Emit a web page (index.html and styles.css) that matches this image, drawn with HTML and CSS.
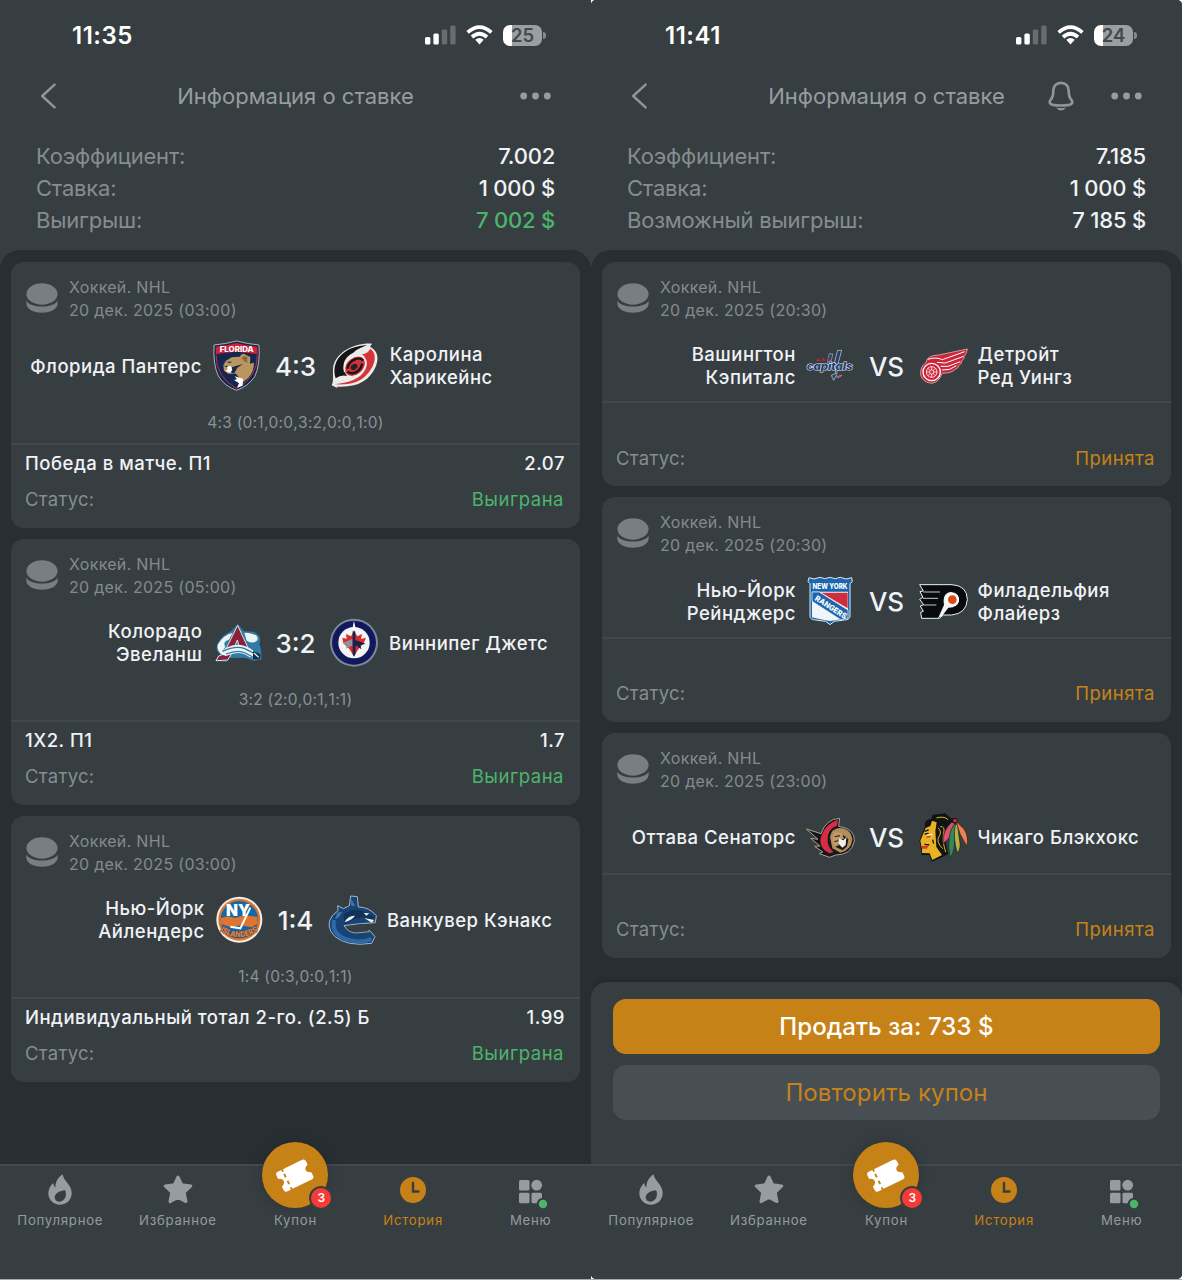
FILE: index.html
```html
<!DOCTYPE html>
<html lang="ru">
<head>
    <meta charset="UTF-8">
    <meta name="viewport" content="width=device-width, initial-scale=1.0">
    <title>Информация о ставке</title>
    <link rel="stylesheet" href="styles.css">
</head>
<body>
    <!-- Общие иконки -->
    <svg class="sprite" width="0" height="0">
        <symbol id="signal" viewBox="0 0 31 20">
            <rect x="0" y="12" width="5.4" height="7.5" rx="1.5" fill="#fff"/>
            <rect x="8.4" y="8.5" width="5.4" height="11" rx="1.5" fill="#fff"/>
            <rect x="16.8" y="4.5" width="5.4" height="15" rx="1.5" fill="#666c6f"/>
            <rect x="25.2" y="0.5" width="5.4" height="19" rx="1.5" fill="#666c6f"/>
        </symbol>
        <symbol id="wifi" viewBox="0 0 27 20">
            <g fill="none" stroke="#fff" stroke-width="3.7">
                <path d="M1.6 7.4Q13.5 -3 25.4 7.4"/>
                <path d="M6 12Q13.5 5.4 21 12"/>
            </g>
            <path d="M9.3 14.8Q13.5 11.4 17.7 14.8L13.5 19.4Z" fill="#fff"/>
        </symbol>
        <symbol id="back" viewBox="0 0 16 26">
            <path d="M14.6 1.6L2.2 13L14.6 24.4" fill="none" stroke="#8f9698" stroke-width="2.4" stroke-linecap="round" stroke-linejoin="round"/>
        </symbol>
        <symbol id="dots" viewBox="0 0 31 8">
            <circle cx="3.7" cy="4" r="3.4"/><circle cx="15.5" cy="4" r="3.4"/><circle cx="27.3" cy="4" r="3.4"/>
        </symbol>
        <symbol id="bell" viewBox="0 0 26 30">
            <path d="M13 1.8C8 1.8 5.3 5.5 5.3 10C5.3 15.5 4.4 17 2.4 19.2C1 21.4 2 23.2 4.6 23.8Q13 25.2 21.4 23.8C24 23.2 25 21.4 23.6 19.2C21.6 17 20.7 15.5 20.7 10C20.7 5.5 18 1.8 13 1.8Z" fill="none" stroke="#8f9698" stroke-width="2.700"/>
            <path d="M8 26.600Q13 27.600 18 26.600Q16.200 29.400 13 29.400Q9.800 29.400 8 26.600Z" fill="#8f9698"/>
        </symbol>
        <symbol id="puck" viewBox="0 0 32 31">
            <ellipse cx="16" cy="11" rx="15.6" ry="10.700"/>
            <path d="M.4 17.400C4 25.500 28 25.500 31.600 17.400V21.500C29.500 32.500 2.500 32.500 .4 21.500Z"/>
        </symbol>
        <symbol id="fire" viewBox="0 0 24 31">
            <path fill-rule="evenodd" d="M14.600 .2C15.400 6 20.500 8.500 22.800 14.500C26 23.500 20 30.700 12 30.700C4 30.700 -1.300 23.500 .8 16C1.600 13 3.500 10.500 5.200 9C5.600 11 6.200 12.400 7.400 13.600C7.200 8.500 9.500 3.500 14.600 .2ZM17.200 16.200C11.500 16.500 6.500 19.500 6.700 23.600C6.900 27.200 10.300 28.200 12.600 27.500C17.500 26.200 19 21.500 17.200 16.200Z"/>
        </symbol>
        <symbol id="star" viewBox="0 0 30 29">
            <path d="M15 2L18.700 9.800L27.800 11L21.200 17.300L23 26.600L15 22.400L7 26.600L8.800 17.300L2.200 11L11.300 9.800Z" stroke-width="3" stroke-linejoin="round"/>
        </symbol>
        <symbol id="ticket" viewBox="0 0 40 34">
            <g transform="rotate(-26 20 17)">
                <path d="M5 5.500H9.500V7.800H11.500V5.500H34Q37 5.500 37 8.500V12.500Q32.500 14 32.500 17Q32.500 20 37 21.500V25.500Q37 28.500 34 28.500H11.500V26.200H9.500V28.500H5Q2.500 28.500 2.500 25.500V21.500Q6.800 20 6.800 17Q6.800 14 2.500 12.500V8.500Q2.500 5.500 5 5.500Z" fill="#fff"/>
                <path d="M10.500 10.500V14.500M10.500 18.500V22.500" stroke="#c78217" stroke-width="2"/>
            </g>
        </symbol>
        <symbol id="clock" viewBox="0 0 26 26">
            <circle cx="13" cy="13" r="13" fill="#c78217"/>
            <path d="M13 6V14.500H18.500" fill="none" stroke="#373e41" stroke-width="2.400" stroke-linecap="round"/>
        </symbol>
        <symbol id="menu" viewBox="0 0 30 30">
            <rect x="1" y="1" width="10.500" height="10.500" rx="1.500"/>
            <circle cx="18.700" cy="6.200" r="5.400"/>
            <rect x="1" y="13.800" width="10.500" height="10.500" rx="1.500"/>
            <rect x="13.500" y="13.800" width="10.500" height="10.500" rx="1.500"/>
            <circle cx="25" cy="25" r="5.200" fill="#4cb56c" stroke="#373e41" stroke-width="2"/>
        </symbol>
    </svg>

    <div class="screens">
        <!-- Рассчитанная ставка -->
        <section class="phone">
            <div class="statusbar">
                <span class="time">11:35</span>
                <svg class="signal"><use href="#signal"/></svg>
                <svg class="wifi"><use href="#wifi"/></svg>
                <span class="battery">25</span>
            </div>
            <header class="header">
                <svg class="back"><use href="#back"/></svg>
                <h1>Информация о ставке</h1>
                <div class="actions">
                    <svg class="dots"><use href="#dots"/></svg>
                </div>
            </header>
            <div class="summary">
                <div class="line"><span>Коэффициент:</span><b>7.002</b></div>
                <div class="line"><span>Ставка:</span><b>1 000 $</b></div>
                <div class="line"><span>Выигрыш:</span><b class="win">7 002 $</b></div>
            </div>

            <main class="list">
                <article class="card">
                    <div class="meta">
                        <svg class="puck"><use href="#puck"/></svg>
                        <p>Хоккей. NHL<br>20 дек. 2025 (03:00)</p>
                    </div>
                    <div class="match">
                        <span class="team home">Флорида Пантерс</span>
                        <svg class="logo" viewBox="37 36 144 144">
                            <path d="M43 45Q78 42 111 33Q144 42 178 45Q182 105 165 140Q145 169 111 181Q75 169 56 138Q40 105 43 45Z" fill="#15274f" stroke="#c5ccd4" stroke-width="2.500"/>
                            <path d="M48 50Q80 48 111 39Q142 48 173 50L173 73Q142 67 111 65Q80 67 49 73Z" fill="#d3213a"/>
                            <path d="M49 74Q48 140 111 176Q174 140 173 74" fill="none" stroke="#ba3043" stroke-width="3"/>
                            <text x="111" y="65" text-anchor="middle" font-size="21" font-weight="800" fill="#fff" textLength="102" lengthAdjust="spacingAndGlyphs">FLORIDA</text>
                            <path d="M71 106L78 93L96 82L120 80Q128 66 138 74L152 81L151 101L163 98Q163 125 146 143L119 166L120 145L109 131L86 131L73 122Z" fill="#b99560"/>
                            <path d="M126 84Q132 76 143 81L143 99L133 94Z" fill="#8a693c"/>
                            <path d="M80 95L97 95L91 100ZM98 111L130 102L113 113L103 131L93 126Z" fill="#172949"/>
                            <path d="M74 108L94 109L98 120L91 129L77 123L85 117ZM105 139L130 146L129 167L112 173L118 160L103 150L112 148Z" fill="#fff"/>
                            <path d="M73 107L86 108L81 113Z" fill="#25304c"/>
                        </svg>
                        <strong class="score">4:3</strong>
                        <svg class="logo" viewBox="391 36 144 144">
                            <path d="M393 166C400 152 396 134 397 116C402 68 460 38 514 41L508 50C545 68 530 112 509 136C486 164 450 172 408 170L411 175Z" fill="#ecebea"/>
                            <path d="M405 145C390 97 424 49 500 46Q473 54 458 68C425 83 421 117 440 138Q421 133 405 145Z" fill="#151416"/>
                            <path d="M509 56C534 75 520 110 500 132C478 158 446 165 401 163Q447 158 468 145C502 126 507 91 484 73Q502 70 509 56Z" fill="#d5343b"/>
                            <ellipse cx="462" cy="108" rx="34" ry="27" transform="rotate(-38 462 108)" fill="#d13139"/>
                            <path d="M432 126C425 93 462 68 490 81" fill="none" stroke="#f1efee" stroke-width="5"/>
                            <path d="M494 89C501 116 474 146 440 139" fill="none" stroke="#f1efee" stroke-width="5"/>
                            <path d="M440 116C445 88 479 78 487 92M485 101C478 128 454 136 441 125" fill="none" stroke="#171417" stroke-width="7"/>
                            <ellipse cx="460" cy="111" rx="11" ry="8" transform="rotate(-35 460 111)" fill="#222"/>
                        </svg>
                        <span class="team">Каролина<br>Харикейнс</span>
                    </div>
                    <p class="periods">4:3 (0:1,0:0,3:2,0:0,1:0)</p>
                    <div class="bet">
                        <div class="row"><span>Победа в матче. П1</span><span>2.07</span></div>
                        <div class="row state"><span>Статус:</span><span class="win">Выиграна</span></div>
                    </div>
                </article>

                <article class="card">
                    <div class="meta">
                        <svg class="puck"><use href="#puck"/></svg>
                        <p>Хоккей. NHL<br>20 дек. 2025 (05:00)</p>
                    </div>
                    <div class="match">
                        <span class="team home">Колорадо<br>Эвеланш</span>
                        <svg class="logo" viewBox="37 28 144 144">
                            <path d="M44 154L59 132Q40 124 53 97Q67 75 91 65L111 43L130 65L158 66Q186 77 176 103Q184 119 182 150L158 153L134 144L86 145L78 156Z" fill="#317ba8"/>
                            <path d="M51 105Q69 75 96 70L84 91Q65 95 74 112L60 128Q49 120 51 105ZM131 69Q177 71 170 92Q159 105 138 93Z" fill="#eef4f5"/>
                            <path d="M68 134L111 47L145 121L119 122L110 91L94 130L81 151L46 153L54 139Z" fill="#8d2038" stroke="#dbe1e5" stroke-width="3"/>
                            <path d="M51 112Q59 126 77 114Q103 101 130 108Q156 115 174 142Q150 148 135 135Q112 124 76 139Q50 132 51 112Z" fill="#eef4f5"/>
                            <path d="M65 125Q106 106 132 117T171 141M76 133Q112 119 134 130T163 146" fill="none" stroke="#287ca6" stroke-width="4"/>
                            <path d="M157 124L180 134L177 149L157 149Z" fill="#172d43"/>
                            <path d="M160 130L174 143" stroke="#d9e7ee" stroke-width="4"/>
                        </svg>
                        <strong class="score">3:2</strong>
                        <svg class="logo" viewBox="390 28 144 144">
                            <circle cx="462" cy="99" r="72" fill="#7d8998"/>
                            <circle cx="462" cy="99" r="66" fill="#11185c"/>
                            <circle cx="462" cy="99" r="47" fill="#f5f5f5"/>
                            <path d="M427 84L440 87L438 73L453 80L462 64L472 80L486 73L483 88L498 84L491 101L475 119L462 140L448 118L430 101Z" fill="#d92d2b"/>
                            <path d="M457 88L428 100L440 106L438 117L458 107Z" fill="#8c959d"/>
                            <path d="M462 40L466 69V91L497 102L481 107L484 119L467 107L466 134L462 141L458 134V68Z" fill="#172352"/>
                            <path d="M462 33L467 58L462 67L457 58Z" fill="#fff"/>
                        </svg>
                        <span class="team">Виннипег Джетс</span>
                    </div>
                    <p class="periods">3:2 (2:0,0:1,1:1)</p>
                    <div class="bet">
                        <div class="row"><span>1X2. П1</span><span>1.7</span></div>
                        <div class="row state"><span>Статус:</span><span class="win">Выиграна</span></div>
                    </div>
                </article>

                <article class="card">
                    <div class="meta">
                        <svg class="puck"><use href="#puck"/></svg>
                        <p>Хоккей. NHL<br>20 дек. 2025 (03:00)</p>
                    </div>
                    <div class="match">
                        <span class="team home">Нью-Йорк<br>Айлендерс</span>
                        <svg class="logo" viewBox="43 35 144 144">
                            <circle cx="116" cy="106" r="69" fill="#f3eee8"/>
                            <circle cx="116" cy="106" r="63" fill="#d9742e"/>
                            <circle cx="116" cy="106" r="56" fill="#1667a7"/>
                            <path d="M61 101L83 96L103 101L131 93L170 98L171 118L154 129L119 123L92 129L61 119Z" fill="#df752e"/>
                            <text x="112" y="95" text-anchor="middle" font-size="48" font-weight="900" fill="#fff" textLength="72" lengthAdjust="spacingAndGlyphs">NY</text>
                            <path d="M149 70L119 132L89 127" fill="none" stroke="#fff" stroke-width="6"/>
                            <path id="islandArc" d="M58 140Q115 178 174 139" fill="none"/>
                            <text font-size="24" font-weight="900" fill="#e37a31" stroke="#20446e" stroke-width="2" paint-order="stroke"><textPath href="#islandArc" textLength="122" lengthAdjust="spacingAndGlyphs">ISLANDERS</textPath></text>
                        </svg>
                        <strong class="score">1:4</strong>
                        <svg class="logo" viewBox="384 35 144 144">
                            <path d="M413 64L430 73L448 64L452 35L472 37L475 68Q508 68 529 94L526 115L509 116L471 119L432 124Q444 144 470 143L509 139L525 157L515 177Q442 188 404 156Q374 125 397 94L414 79Z" fill="#174475" stroke="#a6b5c5" stroke-width="3"/>
                            <path d="M402 107Q394 151 440 165T514 163" fill="none" stroke="#2b6aa6" stroke-width="12"/>
                            <path d="M430 93Q454 69 485 79L526 99L520 112L492 99L463 104L434 119Z" fill="#123256"/>
                            <path d="M434 114Q443 93 465 94Q457 106 434 114ZM491 86L508 87L499 94ZM493 101L523 107L515 115Z" fill="#e9f1f5"/>
                            <path d="M454 44L466 66L452 63ZM412 85L427 82L417 99L405 105Z" fill="#4077a9"/>
                            <path d="M434 127Q446 146 470 146L508 142L490 118Z" fill="#373e41"/>
                            <path d="M434 127Q446 146 470 146L508 142" fill="none" stroke="#a6b5c5" stroke-width="2.500"/>
                        </svg>
                        <span class="team">Ванкувер Кэнакс</span>
                    </div>
                    <p class="periods">1:4 (0:3,0:0,1:1)</p>
                    <div class="bet">
                        <div class="row"><span>Индивидуальный тотал 2-го. (2.5) Б</span><span>1.99</span></div>
                        <div class="row state"><span>Статус:</span><span class="win">Выиграна</span></div>
                    </div>
                </article>
            </main>

            <nav class="tabbar">
                <div class="tab"><svg class="ico-fire"><use href="#fire"/></svg><span>Популярное</span></div>
                <div class="tab"><svg class="ico-star"><use href="#star"/></svg><span>Избранное</span></div>
                <div class="tab"><div class="coupon"><svg><use href="#ticket"/></svg><i>3</i></div><span>Купон</span></div>
                <div class="tab active"><svg class="ico-clock"><use href="#clock"/></svg><span>История</span></div>
                <div class="tab"><svg class="ico-menu"><use href="#menu"/></svg><span>Меню</span></div>
            </nav>
        </section>

        <!-- Открытая ставка -->
        <section class="phone open">
            <div class="statusbar">
                <span class="time">11:41</span>
                <svg class="signal"><use href="#signal"/></svg>
                <svg class="wifi"><use href="#wifi"/></svg>
                <span class="battery">24</span>
            </div>
            <header class="header">
                <svg class="back"><use href="#back"/></svg>
                <h1>Информация о ставке</h1>
                <div class="actions">
                    <svg class="bell"><use href="#bell"/></svg>
                    <svg class="dots"><use href="#dots"/></svg>
                </div>
            </header>
            <div class="summary">
                <div class="line"><span>Коэффициент:</span><b>7.185</b></div>
                <div class="line"><span>Ставка:</span><b>1 000 $</b></div>
                <div class="line"><span>Возможный выигрыш:</span><b>7 185 $</b></div>
            </div>

            <main class="list">
                <article class="card">
                    <div class="meta">
                        <svg class="puck"><use href="#puck"/></svg>
                        <p>Хоккей. NHL<br>20 дек. 2025 (20:30)</p>
                    </div>
                    <div class="match">
                        <span class="team home">Вашингтон<br>Кэпиталс</span>
                        <svg class="logo" viewBox="36 23 144 144">
                            <path d="M131 48L143 48L132 88L128 121L119 138L112 123L125 118L121 86Z" fill="#203e6b" stroke="#d2dbe4" stroke-width="2"/>
                            <path d="M106 58L117 59L108 91L99 91Z" fill="#27456c" stroke="#ccd6df" stroke-width="1.500"/>
                            <text x="38" y="108" font-size="31" font-weight="800" font-style="italic" fill="#233f6e" stroke="#e3e8ec" stroke-width="3" paint-order="stroke" textLength="138" lengthAdjust="spacingAndGlyphs">capitals</text>
                            <path d="M65 80L72 71L80 80ZM81 79L87 69L95 79ZM96 78L102 68L109 78Z" fill="#a62c43"/>
                            <path d="M128 127L144 122L141 126L130 131Z" fill="#cf3044" stroke="#d9dde0" stroke-width="1"/>
                        </svg>
                        <strong class="score">VS</strong>
                        <svg class="logo" viewBox="369 23 144 144">
                            <path d="M390 85Q392 63 428 62L514 44Q512 60 504 66Q508 72 497 80Q499 87 488 94Q488 101 478 105Q466 117 438 117Q430 143 408 147Q380 145 374 122Q371 98 390 85Z" fill="#c9283b" stroke="#f4c9cb" stroke-width="2"/>
                            <path d="M395 75Q421 67 439 76L506 52M423 84L448 86L503 66M434 96L456 96L493 82M438 107L461 105L481 94" fill="none" stroke="#fff" stroke-width="3"/>
                            <circle cx="407" cy="113" r="26" fill="#cf2438" stroke="#fff" stroke-width="4"/>
                            <circle cx="407" cy="113" r="16" fill="none" stroke="#fff" stroke-width="2.500"/>
                            <path d="M407 97V129M391 113H423M396 102L418 124M418 102L396 124" stroke="#fff" stroke-width="2.500"/>
                            <circle cx="407" cy="113" r="6" fill="#cf2438" stroke="#fff" stroke-width="2"/>
                        </svg>
                        <span class="team">Детройт<br>Ред Уингз</span>
                    </div>
                    <div class="bet">
                        <div class="row state"><span>Статус:</span><span class="accepted">Принята</span></div>
                    </div>
                </article>

                <article class="card">
                    <div class="meta">
                        <svg class="puck"><use href="#puck"/></svg>
                        <p>Хоккей. NHL<br>20 дек. 2025 (20:30)</p>
                    </div>
                    <div class="match">
                        <span class="team home">Нью-Йорк<br>Рейнджерс</span>
                        <svg class="logo" viewBox="36 26 144 144">
                            <path d="M45 25L60 29L78 24Q92 32 108 24Q124 32 139 24L156 29L173 25L175 37L168 43V142Q166 152 151 152L121 156L108 166L95 156L65 152Q50 151 48 142V43L42 37Z" fill="#1d66ae" stroke="#dceaf5" stroke-width="3"/>
                            <path d="M54 67H162V145Q139 151 108 155Q78 151 54 144Z" fill="#f1f5f8"/>
                            <path d="M82 70H161V117Z" fill="#ce2e3e"/>
                            <path d="M54 68H76L162 122V146L140 151L54 96Z" fill="#1d66ae" stroke="#fff" stroke-width="2"/>
                            <text x="108" y="60" text-anchor="middle" font-size="24" font-weight="800" fill="#fff" textLength="105" lengthAdjust="spacingAndGlyphs">NEW YORK</text>
                            <text x="61" y="91" transform="rotate(33 61 91)" font-size="23" font-weight="800" fill="#fff" textLength="108" lengthAdjust="spacingAndGlyphs">RANGERS</text>
                        </svg>
                        <strong class="score">VS</strong>
                        <svg class="logo" viewBox="369 26 144 144">
                            <path d="M371 46H468Q514 49 514 91Q511 133 467 137H442L430 147H377L374 129L382 126L373 110L383 106L371 90L381 84L372 67L382 65Z" fill="#080b0d" stroke="#eef1f2" stroke-width="3"/>
                            <path d="M382 68H432M381 87H426M383 107H421" stroke="#edf0f1" stroke-width="2.500"/>
                            <path d="M426 147L444 107Q438 70 466 68Q492 72 489 96Q483 116 457 115L439 139Z" fill="#f2f2f2"/>
                            <circle cx="469" cy="91" r="20" fill="#fff"/>
                            <circle cx="469" cy="91" r="13" fill="#dc4b15"/>
                        </svg>
                        <span class="team">Филадельфия<br>Флайерз</span>
                    </div>
                    <div class="bet">
                        <div class="row state"><span>Статус:</span><span class="accepted">Принята</span></div>
                    </div>
                </article>

                <article class="card">
                    <div class="meta">
                        <svg class="puck"><use href="#puck"/></svg>
                        <p>Хоккей. NHL<br>20 дек. 2025 (23:00)</p>
                    </div>
                    <div class="match">
                        <span class="team home">Оттава Сенаторс</span>
                        <svg class="logo" viewBox="36 28 144 144">
                            <path d="M37 73L81 87Q96 43 137 41L134 65Q184 72 181 109Q173 151 125 151L107 158L76 147L86 142L62 125L78 124L50 101L72 104Z" fill="#171719" stroke="#a9a18f" stroke-width="3"/>
                            <path d="M106 146Q67 127 85 86Q101 54 132 45L129 63Q101 73 101 103Q99 128 119 142Z" fill="#d42d45"/>
                            <path d="M108 97Q111 73 135 70Q172 71 175 105Q171 137 139 144L115 131Z" fill="#b28d5c"/>
                            <path d="M119 112L126 95L149 92L163 104L159 125L146 137L124 126L137 121L119 119Z" fill="#181a1d"/>
                            <path d="M120 83L143 84L150 103L132 102L136 119L120 124L114 108Z" fill="#c39b65"/>
                            <path d="M134 100L148 107L157 98L155 121L145 129L134 117Z" fill="#f1eee9"/>
                            <path d="M122 96L138 93M121 111L132 108" stroke="#191a1e" stroke-width="3"/>
                        </svg>
                        <strong class="score">VS</strong>
                        <svg class="logo" viewBox="369 28 144 144">
                            <path d="M387 66Q382 46 405 43L410 30L448 26L463 40L479 42L485 53L463 64L448 103L456 149L438 158L408 171L400 151H377L373 117L370 108Z" fill="#111315"/>
                            <path d="M389 70L403 64L408 48L422 53L418 80L421 127L438 151L409 166L401 146L378 145L378 132L373 108Z" fill="#ebb323"/>
                            <path d="M421 40Q444 33 456 45M433 66Q448 64 443 86T449 142M426 69Q439 81 429 96T440 132" fill="none" stroke="#e1b32b" stroke-width="3"/>
                            <path d="M385 80L398 76M386 88L398 86M385 119L400 121M410 105L413 117" stroke="#17171a" stroke-width="4"/>
                            <path d="M393 91L409 89M396 99L407 96" stroke="#fff" stroke-width="3"/>
                            <path d="M378 124H397L393 132H378ZM392 95L406 94L403 99H391Z" fill="#d73736"/>
                            <path d="M467 53Q438 79 441 117L462 98L478 57Z" fill="#df526d" stroke="#25232a" stroke-width="2"/>
                            <path d="M474 59Q451 91 462 159Q479 137 475 101L481 59Z" fill="#36885c" stroke="#152c25" stroke-width="2"/>
                            <path d="M478 61Q470 99 484 145Q497 130 490 103L484 58Z" fill="#b7b344" stroke="#24231f" stroke-width="2"/>
                            <path d="M480 50Q489 90 513 125Q519 96 504 73Z" fill="#ef8054" stroke="#24231f" stroke-width="2"/>
                            <circle cx="477" cy="48" r="7" fill="#c43237" stroke="#111" stroke-width="3"/>
                        </svg>
                        <span class="team">Чикаго Блэкхокс</span>
                    </div>
                    <div class="bet">
                        <div class="row state"><span>Статус:</span><span class="accepted">Принята</span></div>
                    </div>
                </article>
            </main>

            <div class="sheet">
                <button class="btn sell">Продать за: 733 $</button>
                <button class="btn repeat">Повторить купон</button>
            </div>

            <nav class="tabbar">
                <div class="tab"><svg class="ico-fire"><use href="#fire"/></svg><span>Популярное</span></div>
                <div class="tab"><svg class="ico-star"><use href="#star"/></svg><span>Избранное</span></div>
                <div class="tab"><div class="coupon"><svg><use href="#ticket"/></svg><i>3</i></div><span>Купон</span></div>
                <div class="tab active"><svg class="ico-clock"><use href="#clock"/></svg><span>История</span></div>
                <div class="tab"><svg class="ico-menu"><use href="#menu"/></svg><span>Меню</span></div>
            </nav>
        </section>
    </div>
</body>
</html>
```
FILE: styles.css
```css
* {
    box-sizing: border-box;
}
body {
    margin: 0;
    background: #fff;
    font-family: Inter, Roboto, sans-serif;
    color: #f0f2f6;
}
p, h1 {
    margin: 0;
}
svg {
    display: block;
    flex: none;
}
.sprite {
    position: absolute;
}
.screens {
    display: grid;
    grid-template-columns: 591px 591px;
    height: 1280px;
    background: #a6abac;
}
.phone {
    display: flex;
    flex-direction: column;
    height: 1279px;
    background: linear-gradient(#373e41 300px, #282f32 300px);
    overflow: hidden;
}
.open {
    border-radius: 5px;
    box-shadow: 0 0 0 5px #fff;
    clip-path: inset(0 0 0 0);
}

/* Верх экрана */
.statusbar {
    display: flex;
    align-items: center;
    height: 72px;
    padding: 0 49px 2px 72px;
    background: #373e41;
}
.time {
    flex: 1;
    font-size: 24px;
    font-weight: 600;
    letter-spacing: 0.5px;
    color: #fff;
}
.open .time {
    padding-left: 2px;
}
.signal {
    width: 31px;
    height: 20px;
    margin-right: 10px;
}
.wifi {
    width: 27px;
    height: 20px;
    margin-right: 10px;
}
.battery {
    position: relative;
    width: 39px;
    height: 21px;
    border-radius: 7px;
    background: linear-gradient(to right, #fff 9px, #9a9fa1 9px);
    color: #434a4d;
    font-size: 18.500px;
    line-height: 21px;
    font-weight: 600;
    text-align: center;
}
.battery::after {
    content: "";
    position: absolute;
    left: 40px;
    top: 7px;
    width: 3px;
    height: 7px;
    border-radius: 0 3px 3px 0;
    background: #858b8d;
}
.header {
    display: grid;
    grid-template-columns: 110px 1fr 110px;
    align-items: center;
    height: 48px;
    padding: 0 40px;
    background: #373e41;
}
.back {
    width: 16px;
    height: 26px;
}
.header h1 {
    font-size: 22px;
    font-weight: 400;
    line-height: 30px;
    text-align: center;
    white-space: nowrap;
    color: #969d9f;
}
.actions {
    display: flex;
    justify-content: flex-end;
    align-items: center;
    gap: 37px;
    fill: #969d9f;
}
.dots {
    width: 31px;
    height: 8px;
}
.bell {
    width: 26px;
    height: 30px;
}
.summary {
    height: 131px;
    padding: 20px 36px 0;
    background: #373e41;
}
.line {
    display: flex;
    justify-content: space-between;
    height: 32px;
    line-height: 32px;
    font-size: 22px;
    letter-spacing: -0.200px;
}
.line span {
    color: #868d8f;
}
.line b {
    font-weight: 500;
}
.line .win, .win {
    color: #4cb56c;
}
.accepted {
    color: #c78217;
}

/* Список событий */
.list {
    flex: 1;
    min-height: 0;
    display: flex;
    flex-direction: column;
    gap: 11.200px;
    padding: 10.500px 11px 0;
    background: #282f32;
    box-shadow: 0 -1px 0 #282f32;
    border-radius: 20px 20px 0 0;
}
.card {
    flex: none;
    width: 569px;
    height: 266px;
    border-radius: 13px;
    background: #373e41;
}
.open .card {
    height: 224.600px;
}
.meta {
    display: flex;
    gap: 11px;
    height: 69.500px;
    padding: 14px 15px 0 15px;
    font-size: 16px;
    line-height: 23px;
    letter-spacing: 0.3px;
    color: #848b8d;
}
.puck {
    width: 32px;
    height: 31px;
    margin-top: 7px;
    fill: #777f82;
}
.match {
    display: grid;
    grid-template-columns: 1fr 48px auto 48px 1fr;
    align-items: center;
    height: 70px;
}
.logo {
    width: 48px;
    height: 48px;
    overflow: visible;
}
.team {
    padding-left: 11px;
    font-size: 18.500px;
    line-height: 23px;
    letter-spacing: 0.500px;
    font-weight: 450;
    white-space: nowrap;
}
.home {
    padding: 0 10.500px 0 0;
    text-align: right;
}
.score {
    padding: 0 14.500px;
    font-size: 26px;
    font-weight: 500;
}
.periods {
    height: 41.500px;
    line-height: 43px;
    font-size: 15.500px;
    letter-spacing: 0.250px;
    font-kerning: none;
    font-feature-settings: "calt" 0;
    text-align: center;
    color: #8b9294;
}
.bet {
    border-top: 2px solid #41484b;
    padding: 0 15px 0 14px;
}
.open .bet {
    padding-top: 36.500px;
}
.row {
    display: flex;
    justify-content: space-between;
    height: 36px;
    line-height: 36px;
    font-size: 18.500px;
    letter-spacing: 0.500px;
    font-weight: 450;
}
.state {
    font-weight: 400;
    padding-right: 1px;
}
.state span:first-child {
    color: #868d8f;
    letter-spacing: 0.300px;
}

/* Кнопки купона */
.sheet {
    display: flex;
    flex-direction: column;
    gap: 11px;
    height: 182px;
    padding: 17px 22px 0;
    border-radius: 16px 16px 0 0;
    background: #373e41;
    box-shadow: 0 -2px 6px rgba(0, 0, 0, 0.15);
}
.btn {
    height: 55px;
    border: 0;
    border-radius: 13px;
    font: 450 24px Inter, Roboto, sans-serif;
    letter-spacing: 0.100px;
}
.sell {
    background: #c78217;
    color: #fff;
}
.repeat {
    background: #474f54;
    color: #c78217;
    font-weight: 400;
}

/* Нижняя навигация */
.tabbar {
    display: grid;
    grid-template-columns: repeat(5, 117.600px);
    justify-content: center;
    height: 115px;
    border-top: 2px solid #434a4d;
    background: #373e41;
}
.tab {
    position: relative;
    display: flex;
    flex-direction: column;
    align-items: center;
    justify-content: flex-end;
    height: 63px;
    font-size: 13.200px;
    line-height: 18px;
    letter-spacing: 0.750px;
    color: #949b9d;
    fill: #969da0;
}
.tab span {
    margin-top: 3px;
}
.active {
    color: #c78217;
}
.ico-fire {
    width: 24px;
    height: 31px;
    margin-bottom: 3px;
}
.ico-star {
    width: 30px;
    height: 29px;
    margin-bottom: 4px;
    stroke: #969da0;
}
.ico-clock {
    width: 26px;
    height: 26px;
    margin-bottom: 5px;
}
.ico-menu {
    width: 30px;
    height: 30px;
    margin: 0 0 -1px 5px;
}
.coupon {
    position: absolute;
    top: -24px;
    left: 25.500px;
    display: flex;
    align-items: center;
    justify-content: center;
    width: 66px;
    height: 66px;
    border-radius: 50%;
    background: #c78217;
    box-shadow: 0 0 14px rgba(0, 0, 0, 0.18);
}
.coupon svg {
    width: 38px;
    height: 33px;
}
.coupon i {
    position: absolute;
    right: -5px;
    bottom: -2px;
    width: 24px;
    height: 24px;
    border: 2px solid #373e41;
    border-radius: 50%;
    background: #f63b37;
    color: #fff;
    font-size: 12px;
    line-height: 20px;
    font-style: normal;
    font-weight: 600;
    letter-spacing: 0;
    text-align: center;
}
```
